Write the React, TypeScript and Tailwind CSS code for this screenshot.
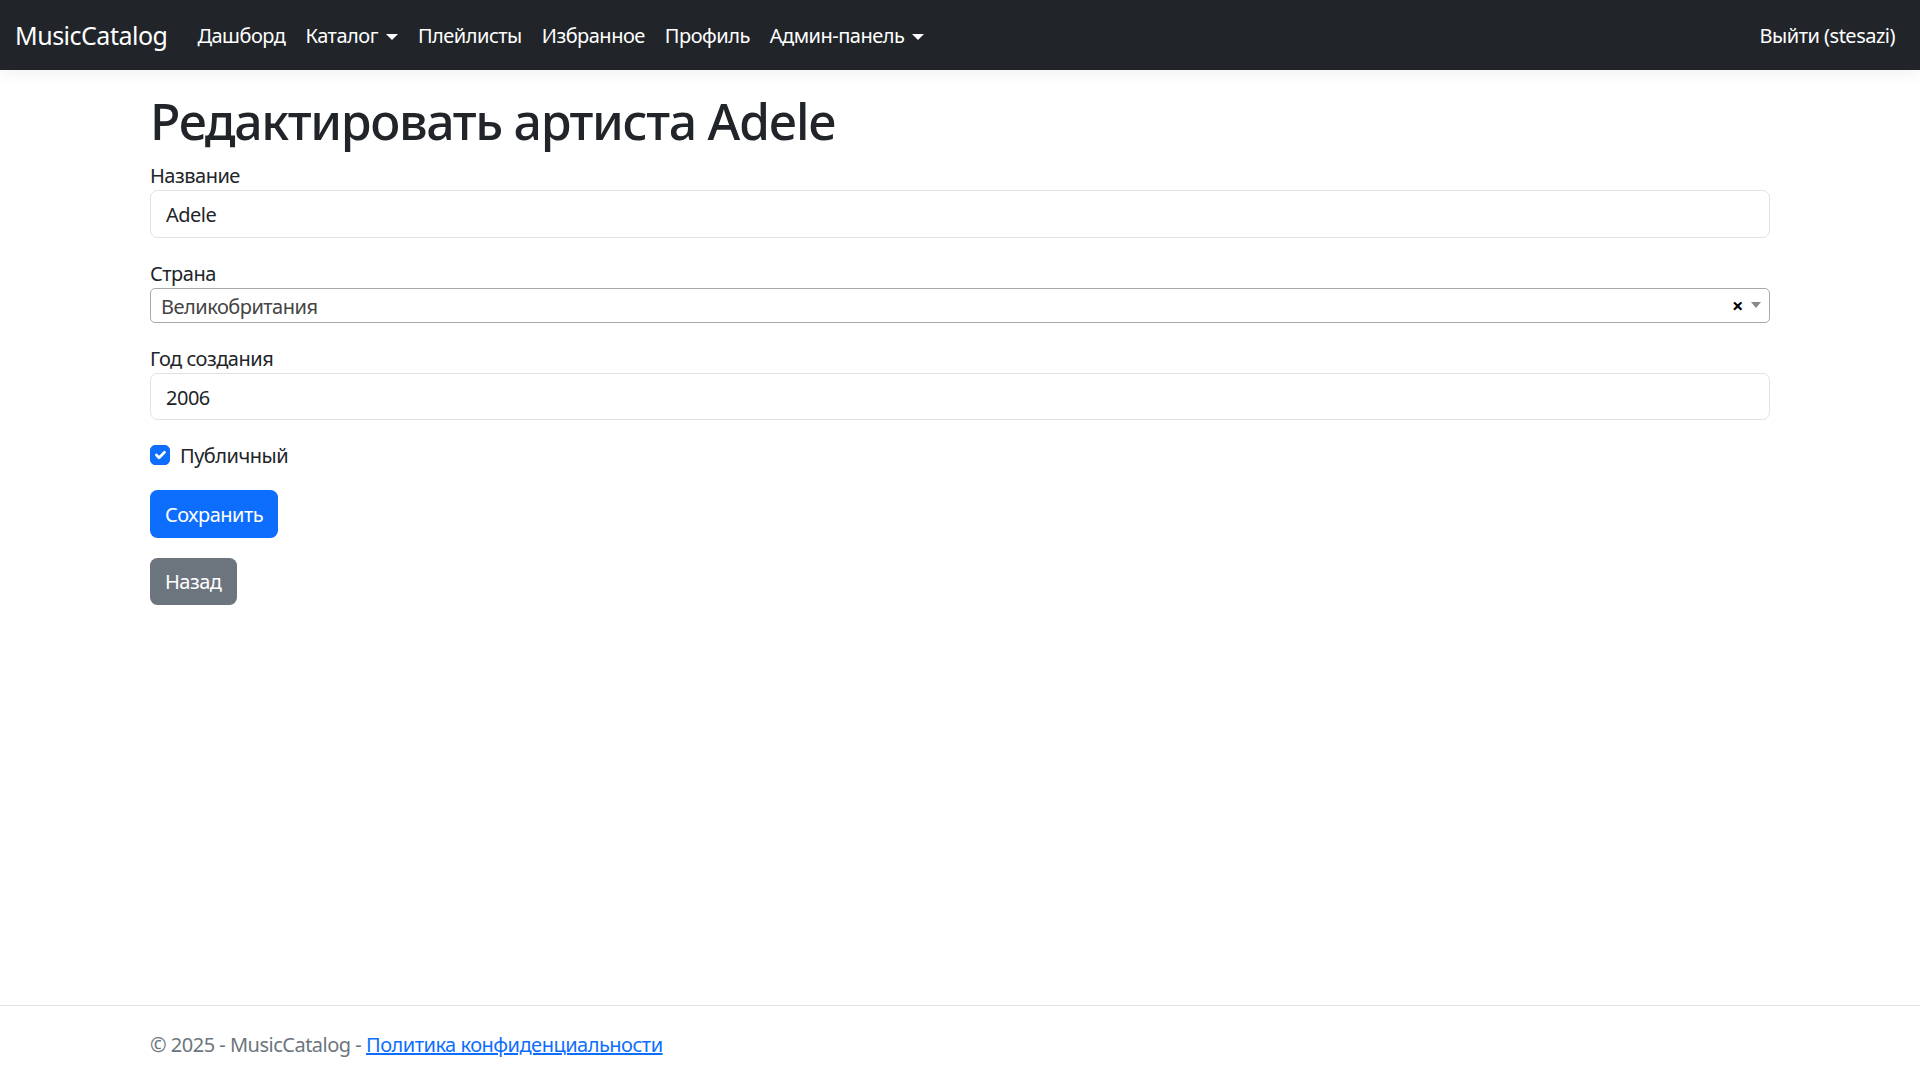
import { useState } from 'react';

const font = { fontFamily: '"Noto Sans", "Open Sans", Arial, sans-serif' };

function Caret() {
  return (
    <span className="ml-[8px] inline-block align-[3px] border-t-[6px] border-x-[6px] border-b-0 border-t-white border-x-transparent" />
  );
}

function Navbar() {
  const links = [
    { label: 'Дашборд' },
    { label: 'Каталог', dropdown: true },
    { label: 'Плейлисты' },
    { label: 'Избранное' },
    { label: 'Профиль' },
    { label: 'Админ-панель', dropdown: true },
  ];
  return (
    <nav className="h-[70px] bg-[#212529] px-[15px] flex items-center shadow-[0_5px_15px_rgba(0,0,0,0.05)] relative z-10">
      <a href="#" className="text-white text-[25px] leading-[37px] mr-[20px]">MusicCatalog</a>
      <ul className="flex items-center flex-1">
        {links.map((l) => (
          <li key={l.label}>
            <a href="#" className="block px-[10px] pt-[11px] pb-[9px] text-white text-[20px] leading-[30px]">
              {l.label}
              {l.dropdown && <Caret />}
            </a>
          </li>
        ))}
      </ul>
      <a href="#" className="block px-[10px] pt-[11px] pb-[9px] text-white text-[20px] leading-[30px]">Выйти (stesazi)</a>
    </nav>
  );
}

function Field({ label, value }: { label: string; value: string }) {
  return (
    <div className="mb-[20px]">
      <label className="block leading-[30px] pt-[1px] -mb-[1px]">{label}</label>
      <input
        defaultValue={value}
        className="block w-full h-[47.5px] px-[15px] pt-[8.5px] pb-[6.5px] border border-[#dee2e6] rounded-[7.5px] text-[20px] leading-[30px] text-[#212529] bg-white outline-none tracking-[-0.025em]"
      />
    </div>
  );
}

export default function App() {
  const [checked, setChecked] = useState(true);
  return (
    <div style={font} className="min-h-screen flex flex-col bg-white text-[#212529] text-[20px] leading-[30px] tracking-[-0.025em]">
      <Navbar />
      <main className="flex-1 w-[1650px] mx-auto px-[15px] pt-[20px]">
        <h1 className="text-[50px] leading-[60px] font-medium tracking-[-0.027em] pt-[1px] mb-[9px]">Редактировать артиста Adele</h1>

        <Field label="Название" value="Adele" />

        <div className="mb-[20px]">
          <label className="block leading-[30px] pt-[1px] -mb-[1px]">Страна</label>
          <div className="h-[35px] border border-[#aaaaaa] rounded-[5px] bg-white flex items-center pl-[10px] pr-[1px]">
            <span className="flex-1 text-[#444444] leading-[35px] pt-[2px]">Великобритания</span>
            <span className="font-bold text-black text-[20px] leading-[30px] mr-0 pt-[1px]">×</span>
            <span className="w-[25px] flex justify-center">
              <span className="inline-block border-t-[6px] border-x-[5px] border-b-0 border-t-[#888888] border-x-transparent" />
            </span>
          </div>
        </div>

        <Field label="Год создания" value="2006" />

        <div className="mb-[20px] flex items-center h-[30px]">
          <button
            onClick={() => setChecked(!checked)}
            className="w-[20px] h-[20px] rounded-[5px] bg-[#0d6efd] border border-[#0d6efd] flex items-center justify-center"
          >
            {checked && (
              <svg viewBox="0 0 20 20" className="w-[20px] h-[20px]">
                <path d="M6 10l3 3l6-6" fill="none" stroke="#fff" strokeWidth="3" strokeLinecap="round" strokeLinejoin="round" />
              </svg>
            )}
          </button>
          <span className="ml-[10px] pt-[2px]">Публичный</span>
        </div>

        <button className="block h-[47.5px] px-[15px] rounded-[7.5px] bg-[#0d6efd] text-white text-[20px] leading-[30px] tracking-[-0.025em] pt-[2px]">Сохранить</button>
        <a href="#" className="inline-flex items-center mt-[20px] h-[47.5px] px-[15px] rounded-[7.5px] bg-[#6c757d] text-white text-[20px] leading-[30px] pt-[2px]">Назад</a>
      </main>
      <footer className="h-[75px] border-t border-[#dee2e6] text-[#6c757d]">
        <div className="w-[1650px] mx-auto px-[15px] leading-[75px] whitespace-nowrap pt-[1px]">
          © 2025 - MusicCatalog - <a href="#" className="text-[#0d6efd] underline">Политика конфиденциальности</a>
        </div>
      </footer>
    </div>
  );
}
